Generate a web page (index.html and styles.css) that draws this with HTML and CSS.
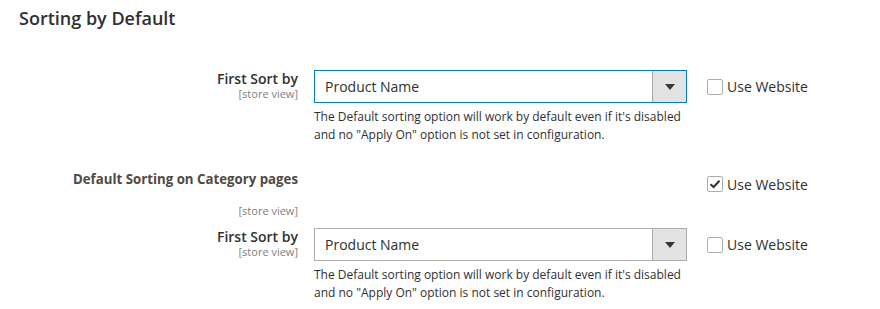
FILE: index.html
```html
<!DOCTYPE html>
<html lang="en">
<head>
    <meta charset="UTF-8">
    <title>Sorting by Default</title>
    <link rel="stylesheet" href="styles.css">
</head>
<body>
    <div class="section">
        <div class="section-title">Sorting by Default</div>

        <div class="field field-first">
            <div class="field-label">
                <span class="label-text">First Sort by</span>
                <span class="scope">[store view]</span>
            </div>
            <div class="field-control">
                <div class="select focused">
                    <span class="select-value">Product Name</span>
                    <span class="select-btn"><span class="arrow"></span></span>
                </div>
                <div class="note">The Default sorting option will work by default even if it's disabled and no "Apply On" option is not set in configuration.</div>
            </div>
            <label class="use-default">
                <span class="checkbox"></span>
                <span>Use Website</span>
            </label>
        </div>

        <div class="field field-group">
            <div class="field-label">
                <span class="group-text">Default Sorting on Category pages</span>
                <span class="scope scope-low">[store view]</span>
            </div>
            <div class="field-control"></div>
            <label class="use-default use-default-low">
                <span class="checkbox checked">
                    <svg width="12" height="10" viewBox="0 0 12 10"><path d="M1.5 5.2 L4.6 8 L10.5 1.8" fill="none" stroke="#303030" stroke-width="2"/></svg>
                </span>
                <span>Use Website</span>
            </label>
        </div>

        <div class="field">
            <div class="field-label">
                <span class="label-text">First Sort by</span>
                <span class="scope">[store view]</span>
            </div>
            <div class="field-control">
                <div class="select">
                    <span class="select-value">Product Name</span>
                    <span class="select-btn"><span class="arrow"></span></span>
                </div>
                <div class="note">The Default sorting option will work by default even if it's disabled and no "Apply On" option is not set in configuration.</div>
            </div>
            <label class="use-default">
                <span class="checkbox"></span>
                <span>Use Website</span>
            </label>
        </div>
    </div>
</body>
</html>
```

FILE: styles.css
```css
* {
    margin: 0;
    padding: 0;
    box-sizing: border-box;
}

body {
    font-family: 'Open Sans', 'Liberation Sans', sans-serif;
    background: #fff;
    color: #303030;
}

.section {
    padding: 6px 19px 0;
}

.section-title {
    font-size: 18px;
    font-weight: 600;
    line-height: 24px;
    color: #303030;
    margin-bottom: 40px;
}

.field {
    display: grid;
    grid-template-columns: 279px 373px 1fr;
    column-gap: 16px;
}

.field-first {
    margin-bottom: 27px;
}

.field-group {
    margin-bottom: 11px;
}

.field-label {
    display: flex;
    flex-direction: column;
    align-items: flex-end;
    text-align: right;
}

.label-text {
    font-size: 14px;
    font-weight: 600;
    line-height: 17px;
}

.group-text {
    font-size: 13.25px;
    font-weight: 700;
    line-height: 16px;
    color: #514943;
}

.scope {
    font-size: 11px;
    line-height: 13px;
    color: #808080;
}

.scope-low {
    margin-top: 17px;
}

.select {
    display: flex;
    height: 33px;
    border: 1px solid #adadad;
    background: #fff;
}

.select.focused {
    border-color: #007bdb;
}

.select-value {
    flex: 1;
    font-size: 14px;
    line-height: 31px;
    padding-left: 10px;
}

.select-btn {
    width: 34px;
    background: #e3e3e3;
    border-left: 1px solid #adadad;
    display: flex;
    align-items: center;
    justify-content: center;
}

.arrow {
    width: 0;
    height: 0;
    border-left: 5px solid transparent;
    border-right: 5px solid transparent;
    border-top: 6px solid #41362f;
}

.note {
    font-size: 12px;
    line-height: 18px;
    margin-top: 5px;
}

.use-default {
    display: flex;
    align-items: center;
    gap: 4px;
    height: 33px;
    padding-left: 4px;
    font-size: 14px;
    align-self: start;
}

.use-default-low {
    height: 26px;
}

.checkbox {
    width: 16px;
    height: 16px;
    border: 1px solid #adadad;
    border-radius: 2px;
    background: #fff;
    display: flex;
    align-items: center;
    justify-content: center;
}
```
